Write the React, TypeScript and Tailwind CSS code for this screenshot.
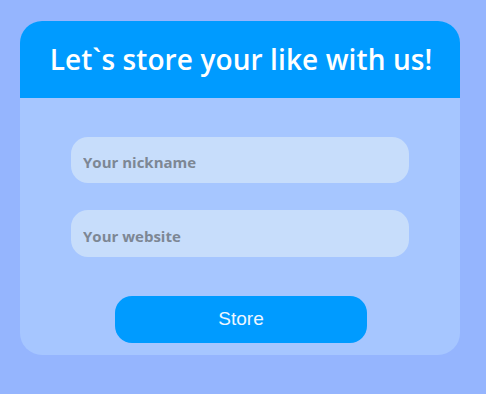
import React from 'react';

const App = () => {
  return (
    <div className="min-h-screen w-full bg-[#95b5fe] pt-[21px] pl-[20px]">
      <div className="w-[440px] h-[334px] rounded-[22px] bg-[#a6c6ff] overflow-hidden flex flex-col">
        {/* header */}
        <div className="h-[77px] bg-[#009bff] flex items-center justify-center">
          <h1 className="text-white text-[28px] font-semibold tracking-[0.1px] font-['Open_Sans',sans-serif] leading-none pb-[1px] pl-[2px]">
            Let`s store your like with us!
          </h1>
        </div>

        {/* form */}
        <form className="flex flex-col items-center pt-[39px]" onSubmit={(e) => e.preventDefault()}>
          <input
            type="text"
            placeholder="Your nickname"
            className="w-[338px] h-[46px] rounded-[17px] bg-[#c7ddfb] px-3 pt-[4px] text-[15px] font-bold text-[#7d8794] placeholder:text-[#7d8794] outline-none font-['Open_Sans',sans-serif]"
          />
          <input
            type="text"
            placeholder="Your website"
            className="mt-[27px] w-[338px] h-[47px] rounded-[17px] bg-[#c7ddfb] px-3 pt-[4px] text-[15px] font-bold text-[#7d8794] placeholder:text-[#7d8794] outline-none font-['Open_Sans',sans-serif]"
          />
          <button
            type="submit"
            className="mt-[39px] ml-[2px] w-[252px] h-[47px] rounded-[17px] bg-[#009bff] text-[#eef6ff] text-[19px] font-['Liberation_Sans',Arial,sans-serif]"
          >
            Store
          </button>
        </form>
      </div>
    </div>
  );
};

export default App;
